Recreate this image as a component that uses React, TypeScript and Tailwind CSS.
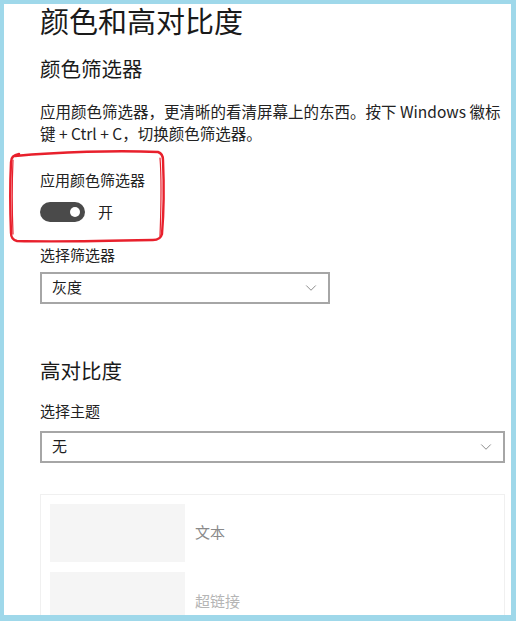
import { ChevronDown } from 'lucide-react';

const font = { fontFamily: '"Noto Sans CJK SC", "Noto Sans", sans-serif' };

function Select({ value, width }: { value: string; width: string }) {
  return (
    <div className={`${width} h-[32px] border-2 border-[#a6a6a6] flex items-center justify-between pl-[10px] pr-[8px] text-[15px] text-[#1f1f1f]`}>
      <span>{value}</span>
      <ChevronDown size={18} strokeWidth={1} className="text-[#666]" />
    </div>
  );
}

export default function App() {
  return (
    <div
      className="relative w-[516px] h-[621px] bg-white border-l-[4px] border-t-[4px] border-r-[5px] border-b-[6px] border-[#9fd8ea] overflow-hidden"
      style={font}
    >
      <div className="pl-[36px] pr-[6px] text-[#1a1a1a]">
        <h1 className="text-[29px] leading-[36px] -mt-[2px]">颜色和高对比度</h1>

        <h2 className="text-[20.5px] leading-[28px] mt-[16px]">颜色筛选器</h2>

        <p className="text-[15.5px] leading-[22px] mt-[18px] text-[#222] w-[462px]">
          应用颜色筛选器，更清晰的看清屏幕上的东西。按下 Windows 徽标键 + Ctrl + C，切换颜色筛选器。
        </p>

        <div className="mt-[25px] text-[15px] leading-[22px] text-[#222]">应用颜色筛选器</div>
        <div className="mt-[10px] flex items-center gap-[13px]">
          <div className="w-[45px] h-[20px] rounded-full bg-[#4a4a4a] flex items-center justify-end pr-[5px]">
            <div className="w-[10px] h-[10px] rounded-full bg-white" />
          </div>
          <span className="text-[15px] text-[#222]">开</span>
        </div>

        <div className="mt-[20px] text-[15px] leading-[22px] text-[#222]">选择筛选器</div>
        <div className="mt-[6px]">
          <Select value="灰度" width="w-[290px]" />
        </div>

        <h2 className="text-[20.5px] leading-[28px] mt-[52px]">高对比度</h2>

        <div className="mt-[16px] text-[15px] leading-[22px] text-[#222]">选择主题</div>
        <div className="mt-[9px]">
          <Select value="无" width="w-[465px]" />
        </div>

        <div className="mt-[31px] w-[465px] border border-[#f0f0f0] p-[9px] flex flex-col gap-[10px]">
          <div className="flex items-center gap-[10px]">
            <div className="w-[135px] h-[58px] bg-[#f5f5f5]" />
            <span className="text-[15px] text-[#8a8a8a]">文本</span>
          </div>
          <div className="flex items-center gap-[10px]">
            <div className="w-[135px] h-[58px] bg-[#f5f5f5]" />
            <span className="text-[15px] text-[#b5b5b5] mt-[2px]">超链接</span>
          </div>
        </div>
      </div>

      {/* hand-drawn red highlight */}
      <svg className="absolute left-[3px] top-[144px]" width="162" height="98" viewBox="0 0 162 98" fill="none">
        <path
          d="M8 8 C50 4 110 2 151 4 C154 5 156 8 156 12 C157 35 157 62 155 86 C154 90 151 92 146 92 C100 93 50 94 10 93 C6 92 4 89 4 85 C3 60 3 35 4 14 C4 10 6 7 12 6"
          stroke="#e8202c"
          strokeWidth="2.4"
          strokeLinecap="round"
        />
        <path d="M6 86 C5 60 5 35 6 12" stroke="#e8202c" strokeWidth="1.2" strokeLinecap="round" />
        <path d="M153 10 C155 35 154 62 153 88" stroke="#e8202c" strokeWidth="1.2" strokeLinecap="round" />
      </svg>
    </div>
  );
}
